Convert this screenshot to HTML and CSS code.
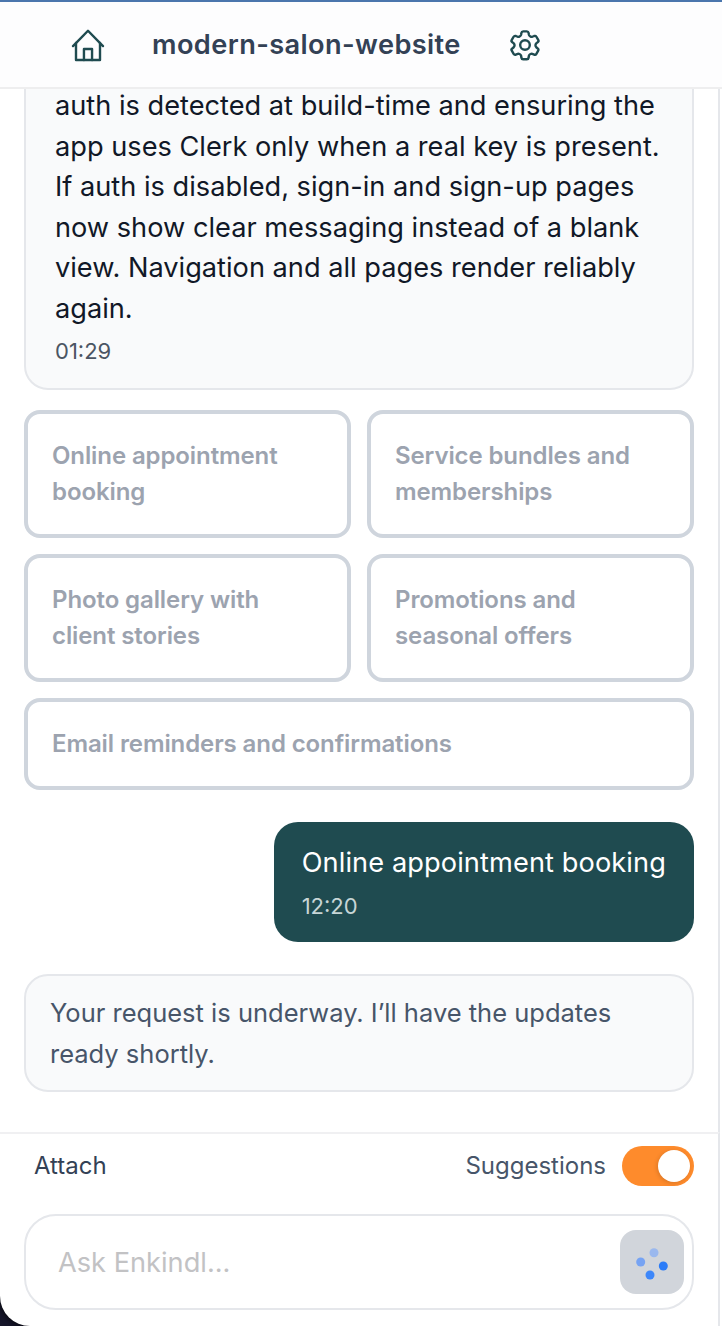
FILE: index.html
```html
<!DOCTYPE html>
<html lang="en">
<head>
    <meta charset="UTF-8">
    <meta name="viewport" content="width=device-width, initial-scale=1.0">
    <title>modern-salon-website</title>
    <link rel="stylesheet" href="styles.css">
</head>
<body>
    <div class="app">
        <header class="topbar">
            <svg class="topbar-icon" viewBox="0 0 24 24" fill="none" stroke="currentColor" stroke-width="1.6" stroke-linecap="round" stroke-linejoin="round">
                <path d="M2 12.700 12 2.500 22 12.700"/>
                <path d="M4 10.700V22h16V10.700"/>
                <path d="M9.300 22v-7.300h5.400V22"/>
            </svg>
            <h1 class="project-name">modern-salon-website</h1>
            <svg class="topbar-icon" viewBox="0 0 24 24" fill="none" stroke="currentColor" stroke-width="1.6" stroke-linecap="round" stroke-linejoin="round">
                <path d="M9.6 3.9c.1-.6.6-1 1.2-1h2.4c.6 0 1.100.4 1.200 1l.2 1.300c.1.400.4.800.8 1 .1 0 .2.100.3.200.4.200.8.300 1.200.100l1.200-.5c.6-.2 1.200 0 1.500.5l1.200 2.100c.3.500.2 1.200-.3 1.500l-1 .8c-.3.300-.5.700-.5 1.100v.4c0 .4.200.8.500 1.100l1 .8c.5.300.6 1 .3 1.500l-1.200 2.100c-.3.500-.9.700-1.500.5l-1.200-.5c-.4-.2-.8-.1-1.200.1-.1.100-.2.200-.3.200-.4.200-.7.600-.8 1l-.2 1.300c-.1.600-.6 1-1.200 1h-2.400c-.6 0-1.100-.4-1.200-1l-.2-1.300c-.1-.4-.4-.8-.8-1-.1 0-.2-.1-.3-.2-.4-.2-.8-.3-1.200-.1l-1.200.5c-.6.200-1.200 0-1.500-.5l-1.200-2.100c-.3-.5-.2-1.200.3-1.500l1-.8c.3-.3.5-.7.500-1.100v-.4c0-.4-.2-.8-.5-1.100l-1-.8c-.5-.3-.6-1-.3-1.500l1.200-2.100c.3-.5.9-.7 1.500-.5l1.200.5c.4.200.8.100 1.200-.1.100-.1.200-.2.300-.2.400-.2.700-.6.800-1z"/>
                <circle cx="12" cy="12" r="3.200"/>
            </svg>
        </header>

        <main class="chat">
            <div class="bubble bubble-agent">
                <p class="bubble-text">auth is detected at build-time and ensuring the app uses Clerk only when a real key is present. If auth is disabled, sign-in and sign-up pages now show clear messaging instead of a blank view. Navigation and all pages render reliably again.</p>
                <span class="bubble-time">01:29</span>
            </div>

            <div class="chips">
                <button class="chip">Online appointment booking</button>
                <button class="chip">Service bundles and memberships</button>
                <button class="chip">Photo gallery with client stories</button>
                <button class="chip">Promotions and seasonal offers</button>
                <button class="chip chip-wide">Email reminders and confirmations</button>
            </div>

            <div class="bubble bubble-user">
                <p class="bubble-text">Online appointment booking</p>
                <span class="bubble-time">12:20</span>
            </div>

            <div class="status-note">Your request is underway. I’ll have the updates ready shortly.</div>
        </main>

        <footer class="composer">
            <div class="composer-tools">
                <span class="attach">Attach</span>
                <div class="suggestions">
                    <span class="suggestions-label">Suggestions</span>
                    <span class="toggle"><span class="toggle-knob"></span></span>
                </div>
            </div>
            <div class="ask-box">
                <span class="ask-placeholder">Ask Enkindl...</span>
                <button class="send-btn">
                    <svg class="send-dots" viewBox="0 0 36 36">
                        <circle cx="20" cy="8.700" r="4.500" fill="#9ab8ee"/>
                        <circle cx="6.700" cy="18" r="4.500" fill="#76a3f3"/>
                        <circle cx="29.300" cy="22" r="4.500" fill="#2b7cf8"/>
                        <circle cx="16" cy="31" r="4.500" fill="#3d87fa"/>
                    </svg>
                </button>
            </div>
        </footer>
    </div>
</body>
</html>
```

FILE: styles.css
```css
:root {
    --teal: #1f4b50;
    --border-soft: #e5e7eb;
    --border-chip: #cfd5dd;
    --bubble-bg: #f9fafb;
    --text-slate: #475569;
}

* {
    box-sizing: border-box;
    margin: 0;
    padding: 0;
}

html,
body {
    height: 100%;
}

body {
    font-family: Inter, 'Liberation Sans', sans-serif;
    background-color: #16162a;
    overflow: hidden;
}

.app {
    height: 1326px;
    display: flex;
    flex-direction: column;
    background-color: #ffffff;
    border-top: 2px solid #4a76ad;
    border-bottom-left-radius: 30px;
    box-shadow: 0 0 6px #000000;
    overflow: hidden;
}

.topbar {
    height: 87px;
    flex-shrink: 0;
    display: flex;
    align-items: center;
    padding-left: 70px;
    background-color: #fdfdfe;
    border-bottom: 2px solid #eeeeef;
}

.topbar-icon {
    width: 36px;
    height: 36px;
    color: var(--teal);
    flex-shrink: 0;
}

.project-name {
    font-size: 27.200px;
    font-weight: 600;
    letter-spacing: 0.400px;
    color: #334155;
    margin: 0 46px;
    white-space: nowrap;
}

.chat {
    flex: 1;
    min-height: 0;
    display: flex;
    flex-direction: column;
    justify-content: flex-end;
    overflow: hidden;
    margin-right: 2px;
    padding: 0 24px 40px;
    border-right: 2px solid var(--border-soft);
}

.bubble {
    flex-shrink: 0;
}

.bubble-text {
    font-size: 27.200px;
    line-height: 40.500px;
}

.bubble-time {
    display: block;
    margin-top: 6px;
    font-size: 22px;
    line-height: 33px;
}

.bubble-agent {
    background-color: var(--bubble-bg);
    border: 2px solid var(--border-soft);
    border-radius: 0 0 24px 24px;
    padding: 30px 28px 20px 29px;
    color: #111827;
}

.bubble-agent .bubble-time {
    color: #4b5563;
}

.chips {
    flex-shrink: 0;
    display: grid;
    grid-template-columns: 327px 327px;
    gap: 16px;
    margin-top: 20px;
}

.chip {
    font-family: inherit;
    font-size: 24px;
    font-weight: 600;
    letter-spacing: -0.100px;
    line-height: 36px;
    text-align: left;
    color: #9ca3af;
    background-color: #ffffff;
    border: 4px solid var(--border-chip);
    border-radius: 16px;
    padding: 24px;
}

.chip-wide {
    grid-column: 1 / -1;
}

.bubble-user {
    align-self: flex-end;
    margin-top: 32px;
    padding: 21px 28px 19px;
    background-color: var(--teal);
    border-radius: 24px;
    color: #ffffff;
}

.bubble-user .bubble-text {
    letter-spacing: 0.100px;
}

.bubble-user .bubble-time {
    margin-top: 6.500px;
    color: #c7d5d6;
}

.status-note {
    flex-shrink: 0;
    margin-top: 32px;
    padding: 17px 24px 16px;
    font-size: 25.500px;
    line-height: 40.500px;
    color: var(--text-slate);
    background-color: var(--bubble-bg);
    border: 2px solid var(--border-soft);
    border-radius: 24px;
}

.composer {
    flex-shrink: 0;
    height: 194px;
    margin-right: 2px;
    border-top: 2px solid #f0f0f2;
    border-right: 2px solid var(--border-soft);
    padding: 12px 24px 0;
}

.composer-tools {
    display: flex;
    align-items: center;
    justify-content: space-between;
    height: 40px;
    padding-left: 10px;
    font-size: 24px;
    color: var(--text-slate);
}

.attach {
    margin-top: -2px;
    color: #334155;
}

.suggestions {
    display: flex;
    align-items: center;
    gap: 16px;
}

.suggestions-label {
    margin-top: -2px;
}

.toggle {
    position: relative;
    display: block;
    width: 72px;
    height: 40px;
    border-radius: 20px;
    background-color: #fe8b2c;
}

.toggle-knob {
    position: absolute;
    top: 4px;
    right: 4px;
    width: 32px;
    height: 32px;
    border-radius: 50%;
    background-color: #ffffff;
    box-shadow: -1px 1px 4px rgba(0, 0, 0, 0.15);
}

.ask-box {
    margin-top: 28px;
    height: 96px;
    display: flex;
    align-items: center;
    justify-content: space-between;
    padding: 0 8px 0 32px;
    border: 2px solid var(--border-soft);
    border-radius: 32px;
    background-color: #ffffff;
}

.ask-placeholder {
    font-size: 27.200px;
    color: #c2c2c4;
}

.send-btn {
    width: 64px;
    height: 64px;
    display: flex;
    align-items: center;
    justify-content: center;
    border: none;
    border-radius: 16px;
    background-color: #d1d5db;
}

.send-dots {
    width: 36px;
    height: 36px;
}
```
